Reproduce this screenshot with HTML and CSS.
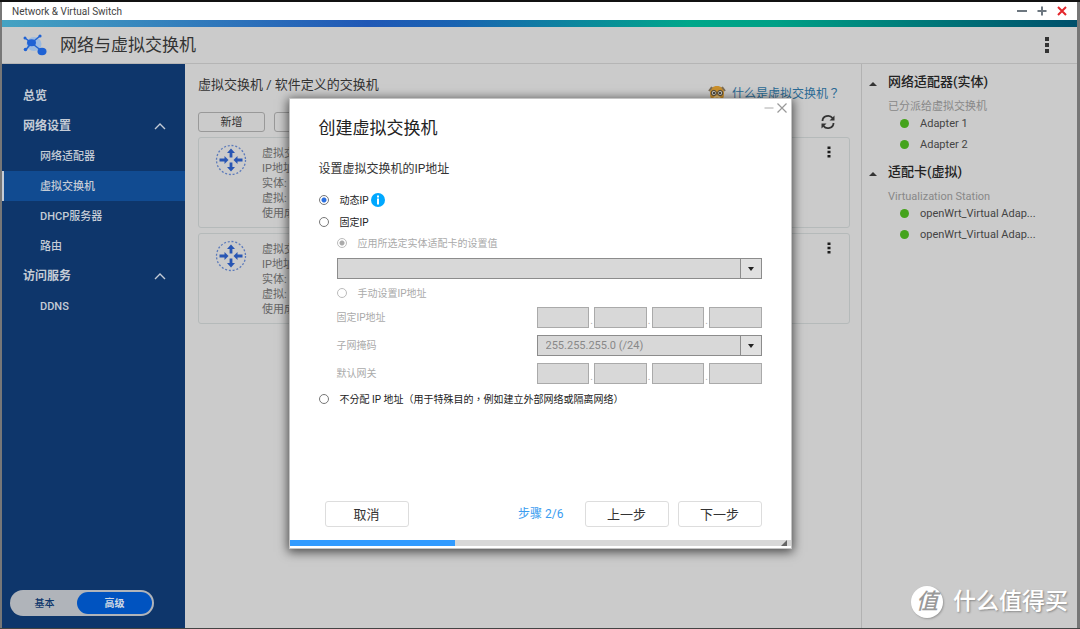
FILE: index.html
```html
<!DOCTYPE html>
<html lang="zh-CN">
<head>
<meta charset="utf-8">
<title>Network &amp; Virtual Switch</title>
<link rel="stylesheet" href="styles.css">
</head>
<body>
<svg class="defs" aria-hidden="true">
  <symbol id="switch" viewBox="0 0 32 32">
    <circle cx="16" cy="16" r="14.500" fill="none" stroke="#5d7bbb" stroke-width="1.300" stroke-dasharray="2 1.800"/>
    <g fill="#2856b4">
      <path d="M16 4.500l4 4.500h-2.600v4.500h-2.800V9H12z"/>
      <path d="M16 27.500l4-4.500h-2.600v-4.500h-2.800V23H12z"/>
      <path d="M13.500 16l-4-4v2.600H4.500v2.800h5V20z"/>
      <path d="M18.500 16l4-4v2.600h5v2.800h-5V20z"/>
    </g>
  </symbol>
  <symbol id="dots" viewBox="0 0 4 12"><path fill="#1c1c1c" d="M0.500 0.500h3v2.600h-3zM0.500 4.700h3v2.600h-3zM0.500 8.900h3v2.600h-3z"/></symbol>
  <symbol id="up" viewBox="0 0 12 8"><path d="M1 7l5-5 5 5" fill="none" stroke="#c3cbd6" stroke-width="1.400"/></symbol>
  <symbol id="tri" viewBox="0 0 8 4"><path d="M0 4l4-4 4 4z" fill="#333"/></symbol>
</svg>
<div class="window">
  <div class="titlebar">
    <span>Network &amp; Virtual Switch</span>
    <div class="controls">
      <button type="button" aria-label="最小化"><svg viewBox="0 0 10 10"><path d="M0 5h10" stroke="#6d7780" stroke-width="2"/></svg></button>
      <button type="button" aria-label="最大化"><svg viewBox="0 0 10 10"><path d="M0.500 5h9M5 0.500v9" stroke="#6d7780" stroke-width="2"/></svg></button>
      <button type="button" aria-label="关闭"><svg viewBox="0 0 10 10"><path d="M1 1l8 8M9 1l-8 8" stroke="#e3262b" stroke-width="2"/></svg></button>
    </div>
  </div>
  <div class="stripe"></div>
  <header class="header">
    <svg class="logo" viewBox="0 0 24 22" aria-hidden="true">
      <ellipse cx="11" cy="10" rx="7.500" ry="7" fill="#9dbbe0"/>
      <path d="M8.500 9L17 2M8.500 9L2 4M8.500 9L3 15.500M8.500 9l11 8.500" stroke="#2464cf" stroke-width="1.500"/>
      <g fill="#1f62d4"><ellipse cx="8.500" cy="8.800" rx="4.500" ry="3.500"/><ellipse cx="19" cy="17.500" rx="4.500" ry="3.700"/><circle cx="17" cy="2" r="1.600"/><circle cx="2" cy="4" r="1.500"/><circle cx="2.500" cy="15.500" r="1.800"/></g>
    </svg>
    <h1>网络与虚拟交换机</h1>
    <button class="more" type="button" aria-label="更多"><svg viewBox="0 0 4 16"><path fill="#333" d="M0 0h4v4H0zM0 6h4v4H0zM0 12h4v4H0z"/></svg></button>
  </header>
  <div class="body">
    <nav class="sidebar">
      <a class="top" href="#overview">总览</a>
      <a class="top" href="#network">网络设置<svg><use href="#up"/></svg></a>
      <a href="#adapters">网络适配器</a>
      <a class="active" href="#switches">虚拟交换机</a>
      <a href="#dhcp">DHCP服务器</a>
      <a href="#route">路由</a>
      <a class="top" href="#access">访问服务<svg><use href="#up"/></svg></a>
      <a href="#ddns">DDNS</a>
      <div class="mode">
        <button type="button">基本</button>
        <button class="on" type="button">高级</button>
      </div>
    </nav>
    <main class="main">
      <div class="crumbs">
        <h2>虚拟交换机 / 软件定义的交换机</h2>
        <a class="help tc" lang="zh-TW" href="#help">
          <svg viewBox="0 0 18 18" aria-hidden="true">
            <path d="M2 8c0-5 3-7 7-7s7 2 7 7c0 6-2 9-7 9s-7-3-7-9z" fill="#c98f2c"/>
            <path d="M1 6l3-4M17 6l-3-4" stroke="#7b6c55" stroke-width="2"/>
            <circle cx="5.800" cy="8" r="2.600" fill="#c6c2b5" stroke="#4d4536"/><circle cx="12.200" cy="8" r="2.600" fill="#c6c2b5" stroke="#4d4536"/>
            <circle cx="6" cy="8" r="1" fill="#222"/><circle cx="12" cy="8" r="1" fill="#222"/>
            <path d="M6 13c2-2 4-2 6 0" stroke="#e0c080" stroke-width="2" fill="none"/><path d="M2 14l3 3M16 14l-3 3" stroke="#544c40" stroke-width="2"/>
          </svg>什么是虚拟交换机？</a>
      </div>
      <div class="tools">
        <button type="button">新增</button>
        <button type="button">管理</button>
        <button class="refresh" type="button" aria-label="刷新"><svg viewBox="0 0 14 16"><g fill="none" stroke="#333" stroke-width="1.800"><path d="M1.500 7c0-5 7-7 10-3M12.500 9c0 5-7 7-10 3"/></g><path d="M13.500 1.500v5H8.500zM0.500 14.500v-5H5.500z" fill="#333"/></svg></button>
      </div>
      <section class="card">
        <svg class="sw"><use href="#switch"/></svg>
        <ul><li>虚拟交换机 1</li><li>IP地址:</li><li>实体:</li><li>虚拟:</li><li>使用成员:</li></ul>
        <button type="button" aria-label="操作"><svg><use href="#dots"/></svg></button>
      </section>
      <section class="card">
        <svg class="sw"><use href="#switch"/></svg>
        <ul><li>虚拟交换机 2</li><li>IP地址:</li><li>实体:</li><li>虚拟:</li><li>使用成员:</li></ul>
        <button type="button" aria-label="操作"><svg><use href="#dots"/></svg></button>
      </section>
    </main>
    <aside class="panel">
      <section>
        <h3><svg><use href="#tri"/></svg>网络适配器(实体)</h3>
        <p>已分派给虚拟交换机</p>
        <ul><li>Adapter 1</li><li>Adapter 2</li></ul>
      </section>
      <section>
        <h3><svg><use href="#tri"/></svg>适配卡(虚拟)</h3>
        <p>Virtualization Station</p>
        <ul><li>openWrt_Virtual Adap...</li><li>openWrt_Virtual Adap...</li></ul>
      </section>
    </aside>
  </div>
</div>

<form class="dialog" role="dialog" aria-labelledby="dlg-title">
  <div class="dialog-controls">
    <button type="button" aria-label="最小化"><svg viewBox="0 0 10 10"><path d="M0.500 5h9" stroke="#aaa"/></svg></button>
    <button type="button" aria-label="关闭"><svg viewBox="0 0 10 10"><path d="M0.500 0.500l9 9M9.500 0.500l-9 9" stroke="#999" stroke-width="1.200"/></svg></button>
  </div>
  <div class="content">
    <h2 id="dlg-title">创建虚拟交换机</h2>
    <h3>设置虚拟交换机的IP地址</h3>
    <label class="opt"><input type="radio" name="mode" checked>动态IP<svg class="info" viewBox="0 0 14 14" aria-hidden="true"><circle cx="7" cy="7" r="7" fill="#00a8ff"/><path d="M6 2.500h2v2H6zM6 5.500h2v6H6z" fill="#fff"/></svg></label>
    <label class="opt"><input type="radio" name="mode">固定IP</label>
    <div class="sub">
      <label class="opt"><input type="radio" name="src" checked disabled>应用所选定实体适配卡的设置值</label>
      <div class="select wide">
        <select disabled aria-label="实体适配卡"><option></option></select>
        <span><svg viewBox="0 0 6 4"><path d="M0 0h6L3 4z"/></svg></span>
      </div>
      <label class="opt"><input type="radio" name="src" disabled>手动设置IP地址</label>
      <div class="fields">
        <div class="field"><label for="ip1">固定IP地址</label>
          <div class="ip"><input id="ip1" disabled><i>.</i><input disabled aria-label="IP 2"><i>.</i><input disabled aria-label="IP 3"><i>.</i><input disabled aria-label="IP 4"></div></div>
        <div class="field"><label for="mask">子网掩码</label>
          <div class="select"><select id="mask" disabled><option>255.255.255.0 (/24)</option></select><span><svg viewBox="0 0 6 4"><path d="M0 0h6L3 4z"/></svg></span></div></div>
        <div class="field"><label for="gw1">默认网关</label>
          <div class="ip"><input id="gw1" disabled><i>.</i><input disabled aria-label="网关 2"><i>.</i><input disabled aria-label="网关 3"><i>.</i><input disabled aria-label="网关 4"></div></div>
      </div>
    </div>
    <label class="opt tc" lang="zh-TW"><input type="radio" name="mode">不分配 IP 地址（用于特殊目的，例如建立外部网络或隔离网络）</label>
    <div class="actions">
      <button type="button">取消</button>
      <span>步骤 2/6</span>
      <button type="button">上一步</button>
      <button type="button">下一步</button>
    </div>
  </div>
  <div class="progress"><div style="width:33%"></div><svg viewBox="0 0 6 6" aria-hidden="true"><path d="M6 0v6H0z" fill="#666"/></svg></div>
</form>
<div class="watermark"><b>值</b>什么值得买</div>
</body>
</html>
```
FILE: styles.css
```css
* { box-sizing: border-box; }
body {
  margin: 0;
  padding: 2px 3px 1px 2px;
  height: 100vh;
  overflow: hidden;
  position: relative;
  background: linear-gradient(#111 0 2px, #777 2px calc(100% - 1px), #444 0);
  font: 11px/15px Roboto, "Noto Sans CJK SC", sans-serif;
  color: #333;
}
h1, h2, h3, p, ul { margin: 0; padding: 0; font-weight: 400; }
ul { list-style: none; }
a { text-decoration: none; }
button { font: inherit; color: inherit; background: none; border: 0; padding: 0; }
svg { display: block; flex: none; }
.defs { position: absolute; width: 0; height: 0; }
.tc { font-family: Roboto, "Noto Sans CJK TC", sans-serif; }

.window { height: 100%; display: flex; flex-direction: column; background: #cbcbcb; }
.titlebar { height: 18px; flex: none; display: flex; align-items: center; justify-content: space-between; padding: 0 10px; background: #fff; color: #444; font-size: 10px; }
.controls { display: flex; gap: 10px; }
.controls svg { width: 10px; height: 10px; }
.stripe { height: 7px; flex: none; background: linear-gradient(90deg, #45a3c2, #2058b6 34%, #1a63b2 42%, #00a78a 64%, #00a086 72%, #00506c); }
.header { height: 37px; flex: none; display: flex; align-items: center; padding: 0 28px 0 21px; border-bottom: 1px solid #b5b5b5; }
.header h1 { font-size: 17px; line-height: 24px; margin-left: 13px; flex: 1; }
.logo { width: 24px; height: 22px; }
.more svg { width: 4px; height: 16px; }
.body { flex: 1; display: grid; grid-template-columns: 183px 1fr 216px; min-height: 0; }

.sidebar { background: #0e366b; color: #c5ccd6; padding: 17px 0 12px; display: flex; flex-direction: column; font-weight: 500; }
.sidebar a { height: 30px; display: flex; align-items: center; justify-content: space-between; padding: 0 19px 0 38px; color: inherit; }
.sidebar a.top { padding-left: 21px; font-size: 12px; font-weight: 700; }
.sidebar a.active { background: #114b91; border-left: 2px solid #c5ccd6; padding-left: 36px; }
.sidebar svg { width: 12px; height: 8px; }
.mode { margin: auto 31px 0 8px; height: 26px; display: grid; grid-template-columns: 65px 1fr; background: #b0b4ba; border-radius: 13px; padding: 2px; }
.mode button { color: #0e366b; font-size: 10px; font-weight: 500; }
.mode .on { background: #0053c0; color: #d0d8e4; border-radius: 11px; font-weight: 700; }

.main { padding: 0 11px 0 13px; display: flex; flex-direction: column; gap: 5px; min-width: 0; }
.crumbs { height: 43px; display: flex; justify-content: space-between; align-items: flex-start; }
.crumbs h2 { font-size: 13px; line-height: 20px; padding-top: 11px; }
.help { display: flex; gap: 6px; padding: 21px 10px 0 0; font-size: 12px; line-height: 18px; color: #2a6a94; }
.help svg { width: 18px; height: 18px; }
.tools { display: flex; gap: 9px; height: 20px; }
.tools button { width: 67px; border: 1px solid #999; border-radius: 3px; }
.tools .refresh { width: 14px; border: 0; margin: 0 15px 0 auto; }
.refresh svg { width: 14px; height: 16px; }
.card { display: flex; height: 91px; border: 1px solid #b5baba; border-radius: 3px; padding: 6px 18px 0 16px; }
.card .sw { width: 32px; height: 32px; }
.card ul { margin-left: 15px; padding-top: 2px; flex: 1; color: #666; }
.card button { align-self: flex-start; padding-top: 2px; }
.card button svg { width: 4px; height: 12px; }

.panel { border-left: 1px solid #b2b2b2; padding: 8px 10px 0 7px; }
.panel section { margin-bottom: 9px; }
.panel h3 { display: flex; align-items: center; gap: 11px; font-size: 13px; line-height: 20px; color: #222; font-weight: 500; }
.panel h3 svg { width: 8px; height: 4px; margin-top: 4px; }
.panel p { color: #888; padding: 7px 0 0 19px; line-height: 15px; }
.panel ul { padding-left: 31px; }
.panel li { display: flex; align-items: center; gap: 11px; height: 18px; margin-bottom: 3px; color: #444; white-space: nowrap; }
.panel li::before { content: ""; width: 9px; height: 9px; border-radius: 50%; background: #45a31c; }

.dialog { position: absolute; top: 98px; left: 0; right: 0; margin: 0 auto; width: 503px; min-height: 451px; display: flex; flex-direction: column; background: #fff; border: 1px solid #c4c4c4; box-shadow: 0 2px 10px 1px rgba(0, 0, 0, .65); font-size: 10px; }
.dialog-controls { position: absolute; top: 4px; right: 4px; display: flex; gap: 3px; }
.dialog-controls svg { width: 10px; height: 10px; }
.content { flex: 1; display: flex; flex-direction: column; padding: 0 29px 13px; }
.content h2 { font-size: 17px; line-height: 58px; color: #222; }
.content h3 { font-size: 12px; line-height: 24px; margin-bottom: 8px; }
.opt { height: 22px; display: flex; align-items: center; color: #222; white-space: nowrap; }
.opt input { appearance: none; width: 10px; height: 10px; margin: 0 11px 0 0; border: 1px solid #777; border-radius: 50%; background: #fff; }
.opt input:checked { background: radial-gradient(circle, #2a6fe0 0 2px, #fff 3px); }
.opt input:disabled { border-color: #bbb; }
.opt input:disabled:checked { background: radial-gradient(circle, #aaa 0 2px, #fff 3px); }
.info { width: 14px; height: 14px; margin-left: 2px; }
.sub { padding-left: 18px; }
.sub .opt, .field { color: #aaa; }
.sub .opt { height: 20px; }
.select { position: relative; height: 21px; }
.wide { margin: 5px 0 4px; }
.select select { appearance: none; width: 100%; height: 100%; border: 1px solid #8c8c8c; border-radius: 0; background: #d8d8d8; color: #888; opacity: 1; font: 11px Roboto, sans-serif; padding: 0 30px 0 8px; }
.select span { position: absolute; top: 1px; right: 1px; bottom: 1px; width: 21px; display: grid; place-items: center; background: #e0e0e0; border-left: 1px solid #8c8c8c; }
.select svg { width: 6px; height: 4px; fill: #222; }
.fields { display: grid; gap: 7px; padding: 4px 0; }
.field { display: grid; grid-template-columns: 1fr 225px; align-items: center; }
.ip { display: flex; height: 21px; align-items: flex-end; }
.ip input { flex: 1; min-width: 0; height: 21px; border: 1px solid #aaa; background: #d8d8d8; padding: 0 4px; }
.ip i { width: 5px; text-align: center; font-style: normal; }
.actions { margin-top: auto; display: flex; align-items: center; gap: 9px; padding-left: 6px; }
.actions button { width: 84px; height: 26px; border: 1px solid #ddd; border-radius: 3px; font-size: 13px; }
.actions span { margin: 0 12px 0 auto; font-size: 12px; color: #3a9cf0; }
.progress { display: flex; justify-content: space-between; align-items: flex-start; height: 6px; margin-bottom: 2px; background: #d8d8d8; }
.progress div { height: 6px; background: #319bff; }
.progress svg { width: 6px; height: 6px; margin-right: 4px; }

.watermark { position: absolute; right: 12px; bottom: 11px; display: flex; align-items: center; gap: 10px; font-size: 23px; line-height: 32px; font-weight: 500; color: #fff; text-shadow: 1px 1px 2px #888; }
.watermark b { width: 32px; height: 32px; border-radius: 50%; background: #fff; color: #999; font-size: 22px; font-style: italic; font-weight: 500; text-align: center; text-shadow: none; box-shadow: 1px 1px 2px #999; }
```
